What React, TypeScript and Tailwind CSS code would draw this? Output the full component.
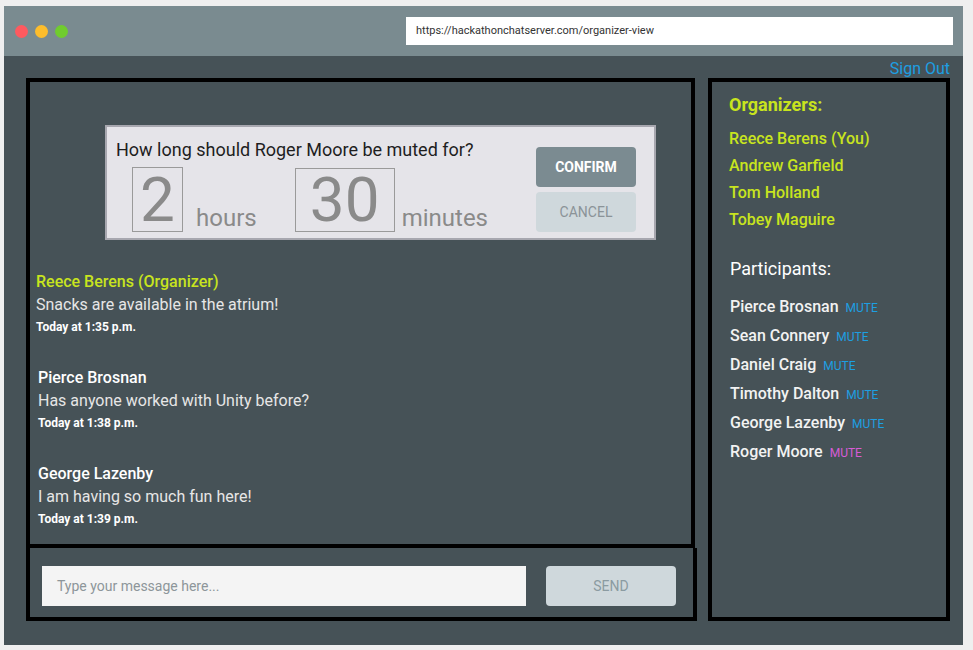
const messages = [
  { id: 1, name: "Reece Berens (Organizer)", organizer: true, text: "Snacks are available in the atrium!", time: "Today at 1:35 p.m." },
  { id: 2, name: "Pierce Brosnan", organizer: false, text: "Has anyone worked with Unity before?", time: "Today at 1:38 p.m." },
  { id: 3, name: "George Lazenby", organizer: false, text: "I am having so much fun here!", time: "Today at 1:39 p.m." },
];

const organizers = ["Reece Berens (You)", "Andrew Garfield", "Tom Holland", "Tobey Maguire"];

const participants = [
  { name: "Pierce Brosnan", muted: false },
  { name: "Sean Connery", muted: false },
  { name: "Daniel Craig", muted: false },
  { name: "Timothy Dalton", muted: false },
  { name: "George Lazenby", muted: false },
  { name: "Roger Moore", muted: true },
];

const MuteDialog = () => {
  return (
    <div className="ml-[75px] mt-[43px] w-[551px] h-[115px] bg-[#e5e4e9] border-2 border-[#a7a7af] flex justify-between">
      <div className="pl-[9px] pt-[11px]">
        <p className="text-[18px] leading-[24px] text-[#1e1e1e]">How long should Roger Moore be muted for?</p>
        <div className="flex items-end mt-[5px] ml-[16px] text-[#8a8a8a]">
          <span className="w-[51px] h-[65px] border border-[#9a9a9a] flex items-center justify-center text-[62px] leading-none">2</span>
          <span className="ml-[13px] text-[24px] leading-[28px]">hours</span>
          <span className="ml-[38px] w-[100px] h-[64px] border border-[#9a9a9a] flex items-center justify-center text-[62px] leading-none">30</span>
          <span className="ml-[7px] text-[24px] leading-[28px]">minutes</span>
        </div>
      </div>
      <div className="pt-[20px] pr-[18px] flex flex-col gap-[5px]">
        <button className="w-[100px] h-[40px] rounded-[4px] bg-[#7b8b91] text-white text-[14px] font-bold">CONFIRM</button>
        <button className="w-[100px] h-[40px] rounded-[4px] bg-[#cfd8dc] text-[#8b9398] text-[14px]">CANCEL</button>
      </div>
    </div>
  );
};

export default function App() {
  return (
    <div className="w-[973px] h-[650px] bg-[#efefef] pt-[6px] pl-[4px] font-['Roboto',sans-serif]">
      <div className="w-[959px] h-[639px] flex flex-col bg-[#465257]">
        <div className="h-[50px] bg-[#7a8b90] flex items-center justify-between pl-[11px] pr-[10px]">
          <div className="flex gap-[7px]">
            <span className="w-[13px] h-[13px] rounded-full bg-[#fe5a5f]" />
            <span className="w-[13px] h-[13px] rounded-full bg-[#fdbd2c]" />
            <span className="w-[13px] h-[13px] rounded-full bg-[#70cc2e]" />
          </div>
          <div className="w-[547px] h-[28px] bg-white flex items-center pl-[10px] text-[11px] text-[#333]">
            https://hackathonchatserver.com/organizer-view
          </div>
        </div>

        <div className="h-[22px] flex justify-end items-center pr-[13px]">
          <a className="text-[16px] leading-[20px] text-[#1d9fe2] mt-[3px]">Sign Out</a>
        </div>

        <div className="flex pl-[22px] gap-[11px]">
          <div className="w-[671px] flex flex-col">
            <div className="w-[669px] h-[470px] border-4 border-black">
              <MuteDialog />
              <div className="mt-[31px] pl-[6px] flex flex-col gap-[30px]">
                {messages.map(({ id, name, organizer, text, time }) => (
                  <div key={id} className={organizer ? "" : "pl-[2px]"}>
                    <h3 className={`text-[16px] leading-[22px] font-medium ${organizer ? "text-[#c8e41e]" : "text-white"}`}>{name}</h3>
                    <p className="text-[16px] leading-[24px] text-[#e6e6e6]">{text}</p>
                    <span className="block text-[12px] leading-[20px] font-bold text-white">{time}</span>
                  </div>
                ))}
              </div>
            </div>
            <div className="h-[73px] border-4 border-t-0 border-black flex pl-[12px] pt-[18px] gap-[20px]">
              <div className="w-[484px] h-[40px] bg-[#f4f4f4] flex items-center pl-[15px] text-[14px] text-[#8d969a]">
                Type your message here...
              </div>
              <button className="w-[130px] h-[40px] rounded-[4px] bg-[#cfd8dc] text-[14px] text-[#8b9ba1]">SEND</button>
            </div>
          </div>

          <div className="w-[242px] h-[543px] border-4 border-black pl-[17px] pt-[11px]">
            <h2 className="text-[18px] leading-[24px] font-bold text-[#c8e41e]">Organizers:</h2>
            <ul className="mt-[8px]">
              {organizers.map((o) => (
                <li key={o} className="text-[16px] leading-[27px] font-medium text-[#c8e41e]">{o}</li>
              ))}
            </ul>
            <h2 className="mt-[24px] text-[18px] leading-[24px] text-white pl-[1px]">Participants:</h2>
            <ul className="mt-[11px] pl-[1px]">
              {participants.map(({ name, muted }) => (
                <li key={name} className="h-[29px] flex items-baseline text-[16px] leading-[29px] font-medium text-[#f2f2f2]">
                  {name}
                  <span className={`ml-[7px] text-[12px] leading-none font-normal ${muted ? "text-[#d75cd6]" : "text-[#1d9fe2]"}`}>MUTE</span>
                </li>
              ))}
            </ul>
          </div>
        </div>
      </div>
    </div>
  );
}
